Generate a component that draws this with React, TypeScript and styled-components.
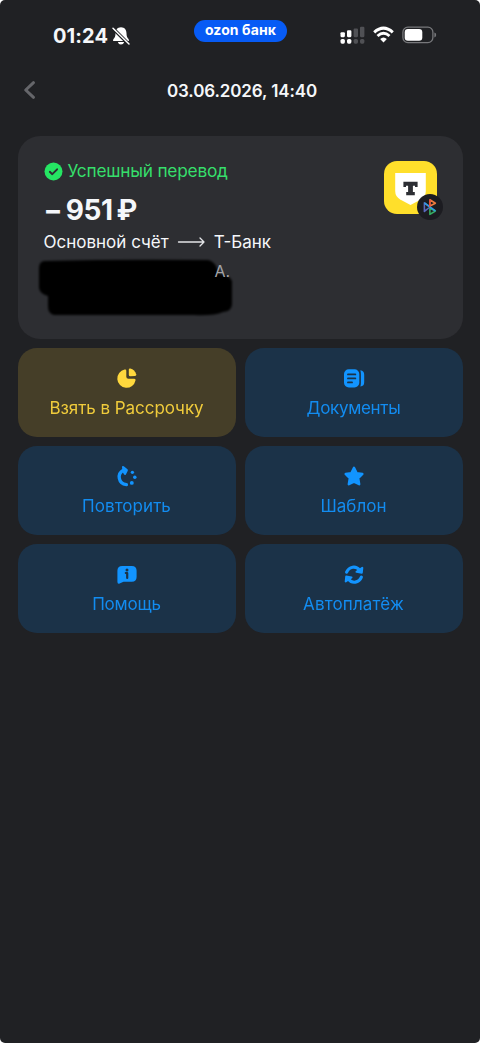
import React from 'react';
import styled, { createGlobalStyle } from 'styled-components';

const GlobalStyle = createGlobalStyle`
  * { box-sizing: border-box; }
  body { margin: 0; background: #fff; font-family: Inter, Roboto, sans-serif; }
`;

const Screen = styled.main`
  width: 480px;
  height: 1043px;
  background: #202124;
  border-radius: 5px;
  overflow: hidden;
  color: #f5f7fa;
`;

const StatusBar = styled.header`
  height: 62px;
  display: grid;
  grid-template-columns: 194px 93px 1fr;
  align-items: start;
`;

const Clock = styled.div`
  display: flex;
  align-items: center;
  gap: 3px;
  padding: 24px 0 0 53px;
  font-size: 20px;
  line-height: 24px;
  font-weight: 700;
  letter-spacing: 0.1px;
  white-space: nowrap;
`;

const BrandPill = styled.div`
  margin-top: 20px;
  height: 22px;
  border-radius: 11px;
  background: #075bf5;
  color: #fff;
  font-size: 14px;
  line-height: 20px;
  font-weight: 700;
  letter-spacing: 0.1px;
  text-align: center;
  white-space: nowrap;
`;

const Indicators = styled.div`
  display: flex;
  align-items: center;
  gap: 8px;
  padding: 25px 0 0 52.5px;
`;

const NavBar = styled.nav`
  height: 57px;
  display: grid;
  grid-template-columns: 58px 1fr 54px;
  align-items: center;
`;

const BackButton = styled.button`
  border: 0;
  padding: 0 0 2px 22px;
  background: none;
  display: flex;
`;

const Title = styled.h1`
  margin: 0;
  text-align: center;
  font-size: 17px;
  font-weight: 600;
  line-height: 22px;
  letter-spacing: -0.12px;
`;

const Content = styled.div`
  padding: 17px 17.5px 0;
  display: grid;
  gap: 9px;
`;

const Card = styled.section`
  height: 203px;
  border-radius: 22px;
  background: #2d2e32;
  padding: 25px 26px;
  display: flex;
  justify-content: space-between;
`;

const Details = styled.div`
  display: flex;
  flex-direction: column;
`;

const StatusLine = styled.div`
  display: flex;
  align-items: center;
  gap: 5px;
  height: 21px;
  color: #36df6b;
  font-size: 17.3px;
  letter-spacing: -0.22px;
  line-height: 20px;

  span { padding-bottom: 1px; }
`;

const Amount = styled.div`
  margin-top: 10px;
  height: 36px;
  font-size: 28px;
  line-height: 36px;
  font-weight: 700;
  letter-spacing: -0.4px;
  word-spacing: -2.5px;
`;

const Route = styled.div`
  display: flex;
  align-items: center;
  gap: 8px;
  margin-top: 3px;
  height: 22px;
  font-size: 17px;
  letter-spacing: 0;
  white-space: nowrap;
`;

const Recipient = styled.div`
  position: relative;
  margin-top: 7px;
  height: 22px;
  padding-left: 171px;
  color: #a4a5a8;
  font-size: 16px;
  line-height: 22px;

  span { position: relative; z-index: 1; }
`;

const Redaction = styled.svg`
  position: absolute;
  left: -10px;
  top: -5px;
`;

const Logo = styled.div`
  position: relative;
  width: 53px;
  height: 53px;
  border-radius: 13px;
  background: #ffdf2b;
  display: flex;
  justify-content: center;
  padding-top: 12px;
`;

const Badge = styled.svg`
  position: absolute;
  left: 33px;
  top: 33px;
`;

const Actions = styled.div`
  display: grid;
  grid-template-columns: 218px 218px;
  grid-auto-rows: 89px;
  gap: 9px;
`;

const Action = styled.button<{ $accent?: boolean }>`
  border: 0;
  border-radius: 19px;
  padding: 19px 0 0;
  display: flex;
  flex-direction: column;
  align-items: center;
  background: ${p => (p.$accent ? '#453e28' : '#1b3248')};
  color: ${p => (p.$accent ? '#ffd83d' : '#1294ff')};
  font-family: inherit;
`;

const Label = styled.span<{ $tracking: number }>`
  margin-top: 8px;
  font-size: 17px;
  line-height: 22px;
  letter-spacing: ${p => p.$tracking}px;
  opacity: 0.92;
`;

const PieIcon = () => (
  <svg width="22" height="22" viewBox="0 0 22 22" fill="currentColor">
    <path d="M8.6 2.6Q10.3 2.1 10.3 3.8V9.7Q10.3 11.8 12.4 11.8H18.3Q20 11.8 19.5 13.5A9.2 9.2 0 1 1 8.6 2.6Z" />
    <path d="M12.8 2.8Q12.8 1.2 14.3 1.5Q18.8 2.6 20.2 7.3Q20.5 8.9 19 9L14.4 9.3Q12.8 9.3 12.8 7.7Z" />
  </svg>
);

const DocsIcon = () => (
  <svg width="22" height="22" viewBox="0 0 22 22" fill="currentColor">
    <rect x="1" y="2.3" width="15.3" height="18.2" rx="4.8" />
    <path d="M17.3 3.3C20.2 3.8 21.2 5.2 21.2 7.7V15.2C21.2 17.7 20.2 19 17.3 19.6Q17.9 18 17.9 15.8V7Q17.9 4.8 17.3 3.3Z" />
    <path d="M5 7.4H12.3M5 11.4H12.3M5 15.4H9" stroke="#1b3248" strokeWidth="1.9" strokeLinecap="round" />
  </svg>
);

const RepeatIcon = () => (
  <svg width="22" height="22" viewBox="0 0 22 22" fill="currentColor">
    <path d="M7.3 5.2C.7 8.9 2.3 18.6 10.4 19.7" fill="none" stroke="currentColor" strokeWidth="3.3" strokeLinecap="round" />
    <path d="M6 2.2Q6 .2 7.8 1.3L11.2 4Q12.2 4.7 11.8 5.7L9.9 9.4Q9 10.8 7.9 9.3L6.8 7.3Z" />
    <circle cx="16.4" cy="7.3" r="1.65" />
    <circle cx="18.8" cy="12.3" r="1.75" />
    <circle cx="15.8" cy="17.9" r="1.95" />
  </svg>
);

const StarIcon = () => (
  <svg width="22" height="22" viewBox="0 0 22 22" fill="currentColor">
    <path d="M11 2.8L13.6 8.1L19.4 9L15.2 13.2L16.2 19.2L11 16.6L5.8 19.2L6.8 13.2L2.6 9L8.4 8.1Z" stroke="currentColor" strokeWidth="2.4" strokeLinejoin="round" />
  </svg>
);

const HelpIcon = () => (
  <svg width="22" height="22" viewBox="0 0 22 22" fill="currentColor">
    <path d="M6.2 3H15.8Q20.6 3 20.6 7.8V14.1Q20.6 18.8 15.8 18.8H7.5L3.6 20.5Q1.4 21.3 1.4 18.7V7.8Q1.4 3 6.2 3Z" />
    <circle cx="11" cy="6.9" r="1.5" fill="#1b3248" />
    <path d="M9.8 10H11.2V15" fill="none" stroke="#1b3248" strokeWidth="2.2" strokeLinecap="round" strokeLinejoin="round" />
  </svg>
);

const SyncIcon = () => (
  <svg width="22" height="22" viewBox="0 0 22 22" fill="none" stroke="currentColor" strokeWidth="3.1" strokeLinecap="round" strokeLinejoin="round">
    <path d="M3.6 9.2C6 3.3 13 2.5 16.4 7" />
    <path d="M18.4 14.1C16 20 9 20.8 5.6 16.3" />
    <path d="M19.3 4.8L18.8 9.7L13.5 8.8Z" fill="currentColor" strokeWidth="2" />
    <path d="M2.7 18.5L3.2 13.6L8.5 14.5Z" fill="currentColor" strokeWidth="2" />
  </svg>
);

const MutedBell = () => (
  <svg width="20" height="20" viewBox="0 0 20 20">
    <path d="M10 1.2C13.7 1.2 15.5 4 15.5 7.3C15.5 10.5 16.2 11.5 17.5 13Q18.7 15 17 15H3Q1.3 15 2.5 13C3.8 11.5 4.5 10.5 4.5 7.3C4.5 4 6.3 1.2 10 1.2ZM6.8 16H13.2Q12.4 18.6 10 18.6Q7.6 18.6 6.8 16Z" fill="#fff" />
    <path d="M2.3 2.7L17.3 17.7" stroke="#202124" strokeWidth="3.4" />
    <path d="M2 2.3L18 18" stroke="#fff" strokeWidth="1.5" strokeLinecap="round" />
  </svg>
);

const Signal = () => (
  <svg width="25" height="20" viewBox="0 0 25 20">
    <g fill="#fff">
      <rect x=".5" y="7.2" width="4.4" height="5" rx="1.1" />
      <rect x="7" y="5.3" width="4.4" height="6.9" rx="1.1" />
      <rect x=".5" y="14" width="4.4" height="4.7" rx="1.6" />
      <rect x="7" y="14" width="4.4" height="4.7" rx="1.6" />
    </g>
    <g fill="#505155">
      <rect x="13.6" y="3.6" width="4.4" height="8.6" rx="1.1" />
      <rect x="20" y="1.8" width="4.4" height="10.4" rx="1.1" />
      <rect x="13.6" y="14" width="4.4" height="4.7" rx="1.6" />
      <rect x="20" y="14" width="4.4" height="4.7" rx="1.6" />
    </g>
  </svg>
);

const Wifi = () => (
  <svg width="21" height="20" viewBox="0 0 21 20">
    <path d="M1.2 7.3Q10.5 -1.1 19.8 7.3" fill="none" stroke="#fff" strokeWidth="3" />
    <path d="M4.5 11Q10.5 5.6 16.5 11" fill="none" stroke="#fff" strokeWidth="2.9" />
    <path d="M7.1 14Q10.5 11 13.9 14L10.5 17.5Z" fill="#fff" />
  </svg>
);

const Battery = () => (
  <svg width="36" height="20" viewBox="0 0 36 20">
    <rect x=".9" y="2.2" width="30" height="15.4" rx="5" fill="none" stroke="#77787b" strokeWidth="1.3" />
    <rect x="2.7" y="4" width="17.6" height="11.8" rx="3.2" fill="#fff" />
    <path d="M32.4 7.6Q34.2 8.1 34.2 10Q34.2 11.9 32.4 12.4Z" fill="#77787b" />
  </svg>
);

const actions = [
  { label: 'Взять в Рассрочку', Icon: PieIcon, accent: true, tracking: -0.05 },
  { label: 'Документы', Icon: DocsIcon, tracking: -0.3 },
  { label: 'Повторить', Icon: RepeatIcon, tracking: 0.05 },
  { label: 'Шаблон', Icon: StarIcon, tracking: 0.05 },
  { label: 'Помощь', Icon: HelpIcon, tracking: -0.2 },
  { label: 'Автоплатёж', Icon: SyncIcon, tracking: 0.15 },
];

export default function App() {
  return (
    <>
      <GlobalStyle />
      <Screen>
        <StatusBar>
          <Clock>01:24<MutedBell /></Clock>
          <BrandPill>ozon банк</BrandPill>
          <Indicators><Signal /><Wifi /><Battery /></Indicators>
        </StatusBar>
        <NavBar>
          <BackButton aria-label="Назад">
            <svg width="15" height="20" viewBox="0 0 15 20" fill="none" stroke="#65666a" strokeWidth="3" strokeLinecap="round" strokeLinejoin="round">
              <path d="M11.5 2.7L3.7 10L11.5 17.3" />
            </svg>
          </BackButton>
          <Title>03.06.2026, 14:40</Title>
        </NavBar>
        <Content>
          <Card>
            <Details>
              <StatusLine>
                <svg width="19" height="19" viewBox="0 0 19 19">
                  <circle cx="9.5" cy="9.5" r="9" fill="#25e663" />
                  <path d="M5.8 9.8L8.3 12.2L13.1 7.3" fill="none" stroke="#2d2e32" strokeWidth="1.9" strokeLinecap="round" strokeLinejoin="round" />
                </svg>
                <span>Успешный перевод</span>
              </StatusLine>
              <Amount>− 951 ₽</Amount>
              <Route>
                <span>Основной счёт</span>
                <svg width="29" height="12" viewBox="0 0 29 12" fill="none" stroke="#e4e5e8" strokeWidth="1.3" strokeLinecap="round" strokeLinejoin="round">
                  <path d="M1.5 6H27M23 2L27 6L23 10" />
                </svg>
                <span>Т-Банк</span>
              </Route>
              <Recipient>
                <span>А.</span>
                <Redaction width="204" height="62" viewBox="0 0 204 62">
                  <defs>
                    <filter id="soft-edge"><feGaussianBlur stdDeviation="0.9" /></filter>
                  </defs>
                  <path d="M10 6Q90 4 174 5Q179 6 182 11L185 19Q196 20 198 26V49Q198 56 189 57Q180 61 160 60H20Q14 59 14 51V41Q6 39 5 33V13Q5 7 10 6Z" fill="#000" filter="url(#soft-edge)" />
                </Redaction>
              </Recipient>
            </Details>
            <Logo>
              <svg width="33" height="34" viewBox="0 0 33 34">
                <path d="M1.2 0H31.8V18Q31.8 23.5 26.8 26.5L16.5 32L6.2 26.5Q1.2 23.5 1.2 18Z" fill="#fff" />
                <path d="M9.4 8.7H23.6V14.1H21V12.7H18.9V19H20.8V22.2H12.2V19H14.1V12.7H12V14.1H9.4Z" fill="#2d2f34" />
              </svg>
              <Badge width="26" height="26" viewBox="0 0 26 26">
                <circle cx="13" cy="13" r="13" fill="#1c1c21" />
                <g fill="none" strokeWidth="1.6" strokeLinejoin="round">
                  <path d="M12.9 5.8V12L18.4 9.2Z" stroke="#ee7a3d" />
                  <path d="M12.9 14.2V20.4L18.4 17Z" stroke="#35ab62" />
                  <path d="M12.9 13L7.4 17.4V8.8Z" stroke="#5a68bd" />
                  <path d="M7.4 8.8L18.4 17" stroke="#319de0" />
                  <path d="M12.9 5.8V13" stroke="#e34b3f" />
                </g>
              </Badge>
            </Logo>
          </Card>
          <Actions>
            {actions.map(({ label, Icon, accent, tracking }) => (
              <Action key={label} $accent={accent}>
                <Icon />
                <Label $tracking={tracking}>{label}</Label>
              </Action>
            ))}
          </Actions>
        </Content>
      </Screen>
    </>
  );
}
